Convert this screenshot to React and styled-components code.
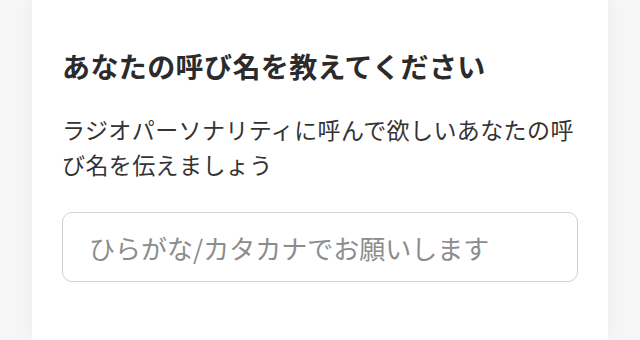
import { createGlobalStyle, styled } from "styled-components";

const GlobalStyle = createGlobalStyle`
	html, body {
		margin: 0;
		padding: 0;
		background: #f6f6f6;
	}
	body {
		font-family: "Noto Sans CJK JP", "Noto Sans", sans-serif;
		color: #333;
	}
`;

const Page = styled.main`
	width: 640px;
	height: 340px;
	padding: 0 32px;
	box-sizing: border-box;
	overflow: hidden;
`;

const Card = styled.section`
	background: #fff;
	height: 100%;
	padding: 46px 30px 0;
	box-sizing: border-box;
	box-shadow: 0 0 14px rgba(0, 0, 0, 0.05);
`;

const Title = styled.h2`
	margin: 0;
	font-size: 28px;
	line-height: 40px;
	letter-spacing: 0.4px;
	font-weight: 700;
	color: #2b2b2b;
`;

const Lead = styled.p`
	margin: 26px 0 0;
	font-size: 23px;
	line-height: 35px;
	letter-spacing: 0.4px;
	color: #333;
`;

const NameInput = styled.input`
	display: block;
	width: 100%;
	height: 70px;
	margin-top: 30px;
	padding: 0 26px;
	box-sizing: border-box;
	border: 1.5px solid #d2d2d2;
	border-radius: 10px;
	font-family: inherit;
	font-size: 26px;
	color: #333;
	background: #fff;
	outline: none;

	&::placeholder {
		color: #8c8c8c;
	}
`;

export default function App() {
	return (
		<>
			<GlobalStyle />
			<Page>
				<Card>
					<Title>あなたの呼び名を教えてください</Title>
					<Lead>ラジオパーソナリティに呼んで欲しいあなたの呼び名を伝えましょう</Lead>
					<NameInput placeholder="ひらがな/カタカナでお願いします" />
				</Card>
			</Page>
		</>
	);
}
